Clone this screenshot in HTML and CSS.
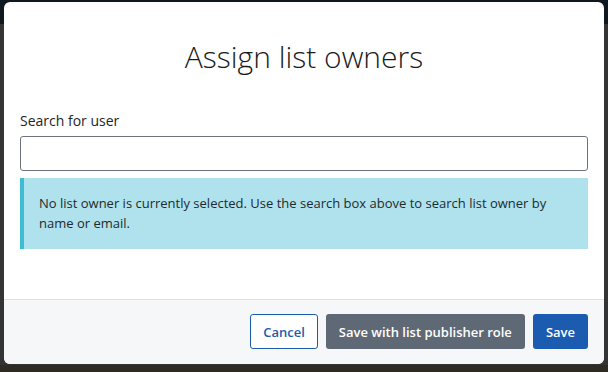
FILE: index.html
```html
<!DOCTYPE html>
<html lang="en">
<head>
  <meta charset="UTF-8">
  <meta name="viewport" content="width=device-width, initial-scale=1.0">
  <title>Assign list owners</title>
  <link rel="stylesheet" href="styles.css">
</head>
<body>
  <div class="page">
    <div class="page-nav"></div>
    <div class="page-body"></div>
    <div class="page-bottom"></div>
  </div>

  <div class="modal">
    <div class="modal-header">
      <h1>Assign list owners</h1>
    </div>

    <div class="modal-body">
      <label class="field-label" for="userSearch">Search for user</label>
      <input class="field-input" id="userSearch" type="text">

      <div class="alert-info">
        No list owner is currently selected. Use the search box above to search list owner by name or email.
      </div>
    </div>

    <div class="modal-footer">
      <button class="btn btn-outline">Cancel</button>
      <button class="btn btn-secondary">Save with list publisher role</button>
      <button class="btn btn-primary">Save</button>
    </div>
  </div>
</body>
</html>
```

FILE: styles.css
```css
* {
  margin: 0;
  padding: 0;
  box-sizing: border-box;
}

body {
  width: 608px;
  height: 372px;
  overflow: hidden;
  font-family: "Open Sans", "Noto Sans", sans-serif;
  color: #212529;
  background: #333333;
}

.page {
  display: flex;
  flex-direction: column;
  height: 372px;
}

.page-nav {
  height: 24px;
  background: #10181e;
}

.page-body {
  flex: 1;
  background: #343434;
}

.page-bottom {
  height: 7px;
  background: #2e2c22;
}

.modal {
  position: absolute;
  top: 2px;
  left: 4px;
  width: 600px;
  height: 362px;
  background: white;
  border-radius: 6px;
  overflow: hidden;
  display: flex;
  flex-direction: column;
}

.modal-header {
  padding: 37px 20px 0;
  text-align: center;
}

.modal-header h1 {
  font-size: 30px;
  font-weight: 300;
  line-height: 36px;
  color: #1b1b1b;
}

.modal-body {
  flex: 1;
  padding: 35px 16px 0;
}

.field-label {
  display: block;
  font-size: 14px;
  line-height: 21px;
  margin-bottom: 5px;
}

.field-input {
  display: block;
  width: 100%;
  height: 35px;
  border: 1px solid #6c757d;
  border-radius: 3px;
  font-family: inherit;
  font-size: 14px;
  padding: 0 10px;
}

.alert-info {
  margin-top: 7px;
  background: #afe2ec;
  border-left: 4px solid #3cbdd4;
  padding: 15px 40px 16px 15px;
  font-size: 13px;
  line-height: 20px;
  color: #1e2a2e;
}

.modal-footer {
  display: flex;
  justify-content: flex-end;
  gap: 8px;
  padding: 14px 16px 15px;
  background: #f6f7f9;
  border-top: 1px solid #dce1e6;
}

.btn {
  height: 35px;
  padding: 0 12px;
  border-radius: 3px;
  border: 1px solid transparent;
  font-family: inherit;
  font-size: 13px;
  font-weight: 600;
  cursor: pointer;
}

.btn-outline {
  background: white;
  color: #1b5cb0;
  border-color: #1b5cb0;
}

.btn-secondary {
  background: #5e6975;
  color: white;
}

.btn-primary {
  background: #1b5cb0;
  color: white;
}
```
